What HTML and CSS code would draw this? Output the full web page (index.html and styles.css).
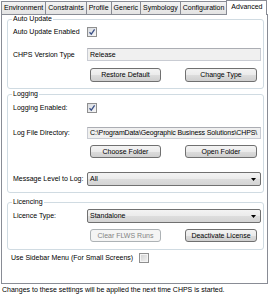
FILE: index.html
```html
<!DOCTYPE html>
<html>
<head>
<meta charset="utf-8">
<link rel="stylesheet" href="styles.css">
</head>
<body>
<div class="tabs">
  <div class="tab">Environment</div>
  <div class="tab">Constraints</div>
  <div class="tab">Profile</div>
  <div class="tab">Generic</div>
  <div class="tab">Symbology</div>
  <div class="tab">Configuration</div>
  <div class="tab active">Advanced</div>
</div>
<div class="panel">
  <fieldset class="group g1">
    <legend>Auto Update</legend>
    <div class="row r-check">
      <span class="label">Auto Update Enabled</span>
      <span class="check"><svg width="8" height="8" viewBox="0 0 8 8"><polyline points="1.5,4.2 3.3,6.2 6.6,1.4" fill="none" stroke="#3d5288" stroke-width="1.3"/></svg></span>
    </div>
    <div class="row r-text1">
      <span class="label">CHPS Version Type</span>
      <span class="input">Release</span>
    </div>
    <div class="btnrow b1">
      <span class="btn w1">Restore Default</span>
      <span class="btn w2">Change Type</span>
    </div>
  </fieldset>
  <fieldset class="group g2">
    <legend>Logging</legend>
    <div class="row r-check2">
      <span class="label">Logging Enabled:</span>
      <span class="check"><svg width="8" height="8" viewBox="0 0 8 8"><polyline points="1.5,4.2 3.3,6.2 6.6,1.4" fill="none" stroke="#3d5288" stroke-width="1.3"/></svg></span>
    </div>
    <div class="row r-text2">
      <span class="label">Log File Directory:</span>
      <span class="input path">C:\ProgramData\Geographic Business Solutions\CHPS\</span>
    </div>
    <div class="btnrow b2">
      <span class="btn w1">Choose Folder</span>
      <span class="btn w2">Open Folder</span>
    </div>
    <div class="row r-sel1">
      <span class="label">Message Level to Log:</span>
      <span class="select"><span>All</span><svg class="arrow" width="5" height="3" viewBox="0 0 5 3"><polygon points="0,0 5,0 2.5,3" fill="#000"/></svg></span>
    </div>
  </fieldset>
  <fieldset class="group g3">
    <legend>Licencing</legend>
    <div class="row r-sel2">
      <span class="label">Licence Type:</span>
      <span class="select"><span>Standalone</span><svg class="arrow" width="5" height="3" viewBox="0 0 5 3"><polygon points="0,0 5,0 2.5,3" fill="#000"/></svg></span>
    </div>
    <div class="btnrow b3">
      <span class="btn w1 disabled">Clear FLWS Runs</span>
      <span class="btn w2">Deactivate License</span>
    </div>
  </fieldset>
  <div class="sidebar">
    <span class="sidelabel">Use Sidebar Menu (For Small Screens)</span>
    <span class="check off"></span>
  </div>
</div>
<div class="footer">Changes to these settings will be applied the next time CHPS is started.</div>
</body>
</html>
```

FILE: styles.css
```css
* { box-sizing: border-box; }
html, body {
  margin: 0;
  background: #fff;
}
body {
  width: 270px;
  height: 298px;
  overflow: hidden;
  font-family: "Liberation Sans", Arial, sans-serif;
  font-size: 7px;
  line-height: 8px;
  color: #000;
}
.tabs {
  display: flex;
  align-items: flex-end;
  height: 14px;
  padding-left: 1px;
}
.tab {
  height: 13px;
  line-height: 11px;
  padding: 0 2px;
  border: 1px solid #898c95;
  border-bottom: 0;
  background: linear-gradient(#f4f4f4, #e3e3e3);
  white-space: nowrap;
}
.tab + .tab { margin-left: -1px; }
.tab.active {
  height: 15px;
  margin-bottom: -1px;
  padding: 0 4px;
  line-height: 12px;
  background: #fff;
  position: relative;
  z-index: 1;
}
.panel {
  width: 267px;
  height: 270px;
  margin-left: 1px;
  border: 1px solid #898c95;
  padding: 0 3px 0 5px;
}
.group {
  margin: 0;
  min-width: 0;
  border: 1px solid #d0dbe2;
  border-radius: 3px;
  padding: 0 2px 6px 5px;
}
.group legend {
  padding: 0 1px;
  margin-left: -1px;
  line-height: 8px;
  font-size: 7px;
}
.g2 { margin-top: 1px; }
.g3 { margin-top: 5px; padding-bottom: 7px; }
.row {
  display: flex;
  align-items: center;
}
.label {
  width: 74px;
  flex: none;
  white-space: nowrap;
}
.r-check { margin-top: 4px; height: 10px; }
.r-text1 { margin-top: 11px; height: 13px; }
.r-check2 { margin-top: 5px; height: 10px; }
.r-text2 { margin-top: 14px; height: 12px; }
.r-sel1 { margin-top: 14px; height: 14px; }
.r-sel2 { margin-top: 3px; height: 14px; }
.check {
  width: 10px;
  height: 10px;
  flex: none;
  border: 1px solid #8f8f8f;
  background: linear-gradient(135deg, #d8dbe0, #f8f8f8);
  display: flex;
  align-items: center;
  justify-content: center;
}
.check.off {
  background: linear-gradient(135deg, #cfcfcf, #f4f4f4);
  box-shadow: inset 0 0 0 1px #f4f4f4;
}
.input {
  flex: 1;
  min-width: 0;
  height: 100%;
  border: 1px solid #c9ccd3;
  border-top-color: #abadb3;
  background: #f0f0f0;
  padding-left: 2px;
  display: flex;
  align-items: center;
  white-space: nowrap;
  overflow: hidden;
}
.input.path {
  letter-spacing: -0.12px;
}
.select {
  flex: 1;
  height: 100%;
  border: 1px solid #707070;
  border-radius: 2px;
  background: linear-gradient(#f3f3f3 0%, #ebebeb 50%, #dddddd 50%, #d4d4d4 100%);
  padding: 0 4px 0 2px;
  display: flex;
  align-items: center;
  justify-content: space-between;
}
.btnrow {
  display: flex;
  margin-left: 77px;
  gap: 24px;
}
.b1 { margin-top: 7px; height: 14px; }
.b2 { margin-top: 6px; height: 13px; }
.b3 { margin-top: 6px; height: 13px; }
.btn {
  height: 100%;
  border: 1px solid #707070;
  border-radius: 3px;
  background: linear-gradient(#f3f3f3 0%, #ebebeb 50%, #dddddd 50%, #cfcfcf 100%);
  display: flex;
  align-items: center;
  justify-content: center;
  white-space: nowrap;
}
.w1 { width: 71px; }
.w2 { width: 72px; }
.btn.disabled {
  border-color: #adb2b5;
  background: #f4f4f4;
  color: #838383;
}
.sidebar {
  display: flex;
  align-items: center;
  height: 10px;
  margin-top: 3px;
  margin-left: 4px;
}
.sidelabel {
  width: 128px;
  white-space: nowrap;
}
.footer {
  margin-top: 2px;
  padding-left: 2px;
  white-space: nowrap;
}
```
